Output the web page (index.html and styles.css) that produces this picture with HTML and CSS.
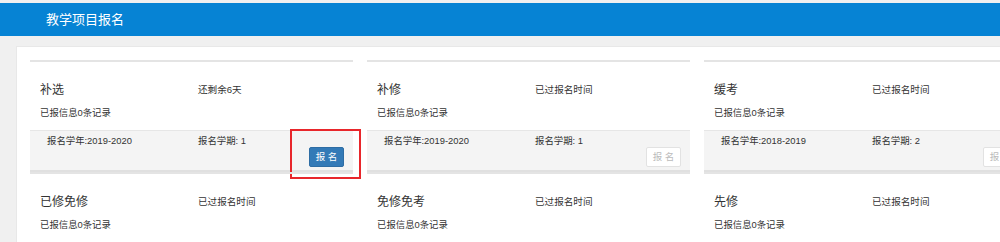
FILE: index.html
```html
<!DOCTYPE html>
<html lang="zh-CN">
<head>
<meta charset="utf-8">
<title>教学项目报名</title>
<link rel="stylesheet" href="styles.css">
</head>
<body>
<div class="header">教学项目报名</div>
<div class="panel">
  <div class="grid">
    <div class="card">
      <div class="card-body">
        <div class="title">补选</div>
        <div class="status">还剩余6天</div>
        <div class="info">已报信息0条记录</div>
      </div>
      <div class="card-foot">
        <div class="ftext">报名学年:2019-2020</div>
        <div class="fcol">
          <div class="ftext">报名学期: 1</div>
          <button class="btn btn-primary">报 名</button>
        </div>
      </div>
      <div class="mark"></div>
    </div>
    <div class="card">
      <div class="card-body">
        <div class="title">补修</div>
        <div class="status">已过报名时间</div>
        <div class="info">已报信息0条记录</div>
      </div>
      <div class="card-foot">
        <div class="ftext">报名学年:2019-2020</div>
        <div class="fcol">
          <div class="ftext">报名学期: 1</div>
          <button class="btn btn-disabled">报 名</button>
        </div>
      </div>
    </div>
    <div class="card">
      <div class="card-body">
        <div class="title">缓考</div>
        <div class="status">已过报名时间</div>
        <div class="info">已报信息0条记录</div>
      </div>
      <div class="card-foot">
        <div class="ftext">报名学年:2018-2019</div>
        <div class="fcol">
          <div class="ftext">报名学期: 2</div>
          <button class="btn btn-disabled">报 名</button>
        </div>
      </div>
    </div>
    <div class="card">
      <div class="card-body">
        <div class="title">已修免修</div>
        <div class="status">已过报名时间</div>
        <div class="info">已报信息0条记录</div>
      </div>
    </div>
    <div class="card">
      <div class="card-body">
        <div class="title">免修免考</div>
        <div class="status">已过报名时间</div>
        <div class="info">已报信息0条记录</div>
      </div>
    </div>
    <div class="card">
      <div class="card-body">
        <div class="title">先修</div>
        <div class="status">已过报名时间</div>
        <div class="info">已报信息0条记录</div>
      </div>
    </div>
  </div>
</div>
</body>
</html>
```
FILE: styles.css
```css
html, body {
  margin: 0;
  padding: 0;
}
body {
  background: #f0f0f0;
  font-family: "Liberation Sans", "Noto Sans CJK SC", sans-serif;
  color: #333;
  overflow: hidden;
  padding-top: 3px;
}
.header {
  height: 33px;
  line-height: 33px;
  background: #0683d4;
  color: #fff;
  font-size: 13px;
  padding-left: 46px;
}
.panel {
  margin: 10px 0 0 16px;
  width: 1060px;
  background: #fff;
  border: 1px solid #e8e8e8;
  padding: 13px 0 0 13px;
  min-height: 300px;
}
.grid {
  display: grid;
  grid-template-columns: repeat(3, 323px);
  column-gap: 14px;
}
.card {
  position: relative;
  border-top: 2px solid #e4e4e4;
}
.card-body {
  display: grid;
  grid-template-columns: 158px 1fr;
  padding: 18px 0 9px 10px;
}
.title {
  font-size: 12px;
  line-height: 20px;
  color: #333;
}
.status {
  font-size: 9.6px;
  line-height: 20px;
}
.info {
  grid-column: 1 / 3;
  margin-top: 5px;
  font-size: 9.4px;
  line-height: 16px;
}
.card-foot {
  display: grid;
  grid-template-columns: 151px 1fr;
  background: #f4f4f4;
  border-top: 1px solid #e6e6e6;
  border-bottom: 2px solid #e0e0e0;
  padding: 4px 9px 3px 17px;
}
.ftext {
  font-size: 9.4px;
  line-height: 12px;
}
.fcol {
  display: flex;
  flex-direction: column;
}
.btn {
  align-self: flex-end;
  width: 35px;
  height: 20px;
  padding: 0;
  border-radius: 2px;
  font-family: "Liberation Sans", "Noto Sans CJK SC", sans-serif;
  font-size: 9.5px;
  line-height: 18px;
  cursor: pointer;
}
.btn-primary {
  background: #337ab7;
  border: 1px solid #2e6da4;
  color: #fff;
}
.btn-disabled {
  background: #fff;
  border: 1px solid #e2e2e2;
  color: #bbb;
}
.mark {
  position: absolute;
  left: 260px;
  top: 67px;
  width: 67px;
  height: 46px;
  border: 2px solid #e8262b;
}
```
